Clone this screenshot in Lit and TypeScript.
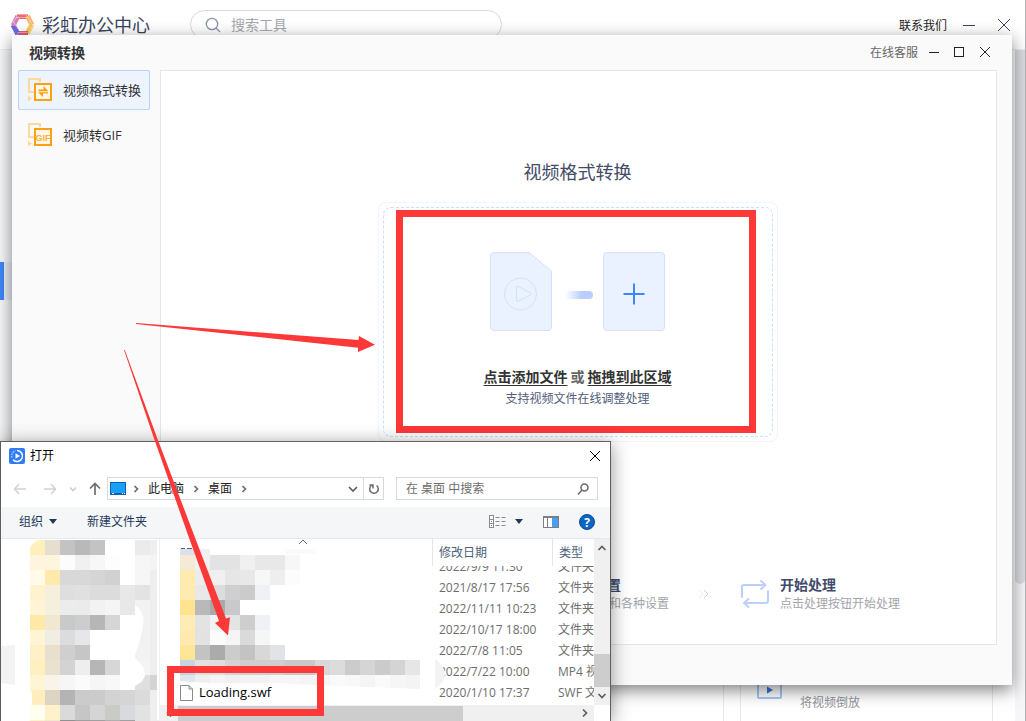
import { LitElement, html, css, svg } from "lit";
import { customElement } from "lit/decorators.js";

const base = css`
  * { box-sizing: border-box; }
  button {
    font: inherit;
    color: inherit;
    background: none;
    border: 0;
    padding: 0;
    margin: 0;
    cursor: pointer;
    display: flex;
    align-items: center;
  }
  input { font: inherit; border: 0; outline: 0; background: none; padding: 0; min-width: 0; }
  svg { display: block; flex: none; }
  a { color: inherit; text-decoration: none; }
`;

@customElement("tool-center")
class ToolCenter extends LitElement {
  static styles = [base, css`
    :host { display: flex; flex-direction: column; height: 100%; background: #fff; border-right: 1px solid #b4b4b6; border-bottom: 1px solid #999; }
    .header { display: flex; align-items: center; height: 50px; padding: 0 10px 0 11px; border-bottom: 1px solid #ececec; flex: none; }
    .brand { margin-left: 8px; font-size: 18px; line-height: 24px; color: #3a4560; }
    .search { display: flex; align-items: center; gap: 10px; width: 312px; height: 29px; margin-left: 40px; padding: 0 14px; border: 1px solid #d9d9dc; border-radius: 15px; }
    .search input { flex: 1; font-size: 14px; line-height: 20px; }
    .search input::placeholder { color: #a6a8ae; opacity: 1; }
    .actions { display: flex; align-items: center; gap: 16px; margin-left: auto; font-size: 12px; color: #222; }
    .body { display: flex; flex: 1; min-height: 0; }
    .nav { width: 16px; padding-top: 212px; background: #f7f8fa; }
    .current { display: block; width: 100%; height: 38px; border-left: 4px solid #3f86f8; background: #e9eef5; }
    .cards { flex: 1; display: grid; grid-auto-flow: column; grid-auto-columns: 253px; gap: 16px; justify-content: end; align-content: end; padding-right: 22px; min-width: 0; overflow: hidden; }
    .card { display: flex; gap: 18px; height: 70px; padding: 14px 16px; border: 1px solid #e8e8ea; border-bottom: 0; }
    .card svg { margin-top: 8px; }
    .card h3 { margin: 0 0 8px; font-size: 14px; line-height: 18px; color: #3a4560; }
    .card p { margin: 0; font-size: 12px; line-height: 22px; color: #909299; }
    .track { width: 10px; background: #f6f6f8; }
    .thumb { height: 534px; border-radius: 0 0 5px 5px; background: #d9dbe0; }
  `];

  render() {
    const cards = [["视频截取", "截取视频片段"], ["视频变速", "调整视频速度"], ["视频倒放", "将视频倒放"]];
    return html`
      <header class="header">
        <svg width="23" height="24" viewBox="0 0 23 24" fill="none" stroke-width="5">
          <path d="M6 3.500h11" stroke="#f0696f"/><path d="M16.500 3l4.300 9" stroke="#f9b268"/>
          <path d="M20.800 11.500l-4.500 9" stroke="#f7ca58"/><path d="M17 20.500H6.500" stroke="#e85c74"/>
          <path d="M6.800 21L2.200 12" stroke="#6e68dc"/><path d="M2.200 12.500l4.600-9.500" stroke="#d880b4"/>
          <path d="M2 8l5 8M6 3l-4 7M15 2l7 10M20 7l-5 9M22 12l-4 9M5 1.500h13M5 4.500h12M6 19.500h11M6 22.500h11" stroke="#fff" stroke-width=".7" opacity=".55"/>
        </svg>
        <span class="brand">彩虹办公中心</span>
        <label class="search">
          <svg width="16" height="16" fill="none" stroke="#8a94ad" stroke-width="1.300"><circle cx="7" cy="7" r="5.700"/><path d="M11 11l4 4"/></svg>
          <input type="search" placeholder="搜索工具" aria-label="搜索工具">
        </label>
        <div class="actions">
          <a href="#contact">联系我们</a>
          <button aria-label="最小化"><svg width="12" height="12" stroke="#3a4560"><path d="M0 6.500h12"/></svg></button>
          <button aria-label="关闭"><svg width="24" height="14" stroke="#3a4560" fill="none"><path d="M7 1l12 12M19 1L7 13"/></svg></button>
        </div>
      </header>
      <div class="body">
        <nav class="nav"><a class="current" href="#video" aria-label="视频工具"></a></nav>
        <main class="cards">
          ${cards.map(([title, text]) => html`
            <article class="card">
              <svg width="25" height="25" fill="none" stroke="#a5c9f8" stroke-width="2"><rect x="1" y="1" width="23" height="23" rx="1"/><path d="M10 12.500v7l6-3.500z" fill="#3577dd" stroke="none"/></svg>
              <div><h3>${title}</h3><p>${text}</p></div>
            </article>`)}
        </main>
        <div class="track"><div class="thumb"></div></div>
      </div>`;
  }
}

@customElement("video-convert")
class VideoConvert extends LitElement {
  static styles = [base, css`
    :host { display: flex; flex-direction: column; background: #fafafa; box-shadow: 0 5px 16px rgba(0, 0, 0, .5); }
    .titlebar { display: flex; align-items: center; justify-content: space-between; height: 35px; padding: 0 21px 0 17px; flex: none; }
    h1 { margin: 0; font-size: 14px; line-height: 20px; color: #333; }
    .controls { display: flex; align-items: center; gap: 11px; padding-bottom: 2px; font-size: 12px; color: #666; }
    .controls svg { stroke: #222; fill: none; }
    .controls button + button { margin-left: 3px; }
    .body { display: flex; flex: 1; min-height: 0; padding: 0 15px 40px 6px; gap: 10px; }
    .side { display: flex; flex-direction: column; gap: 5px; width: 132px; flex: none; }
    .side button { height: 40px; padding: 0 7px 2px 9px; gap: 11px; border: 1px solid transparent; border-radius: 2px; font-size: 13px; color: #333; white-space: nowrap; }
    .side button.on { background: #edf4fe; border-color: #b8d4fc; }
    .side svg { margin-top: 2px; }
    .panel { flex: 1; display: flex; flex-direction: column; align-items: center; min-width: 0; padding: 89px 2px 31px 0; background: #fff; border: 1px solid #e6e6e6; }
    h2 { margin: 0 0 18px; font-size: 18px; line-height: 24px; font-weight: 400; color: #424b66; }
    .zone { position: relative; width: 400px; padding: 4px; border: 1px solid #eff4ff; border-radius: 8px; }
    .drop { display: flex; flex-direction: column; align-items: center; height: 230px; padding-top: 44px; border: 1px dashed #cddcfb; border-radius: 8px; }
    .pick { margin: 36px 0 0; display: flex; gap: 3px; font-size: 14px; line-height: 20px; font-weight: 700; color: #666; }
    .pick a { color: #333; text-decoration: underline; text-underline-offset: 3px; }
    .hint { margin: 2px 0 0; font-size: 12px; line-height: 20px; color: #525b7a; }
    .mark { position: absolute; inset: 7px 21px 8px 17px; border: 7px solid #fc3838; pointer-events: none; }
    .steps { display: flex; align-items: center; margin: auto 0 0; padding: 0; list-style: none; white-space: nowrap; }
    .steps li { display: flex; align-items: center; gap: 11px; }
    .steps h3 { margin: 0; font-size: 14px; line-height: 20px; color: #424a6b; }
    .steps p { margin: 0; font-size: 12px; line-height: 18px; color: #a2a4aa; }
  `];

  render() {
    const next = html`<svg width="72" height="10" fill="none"><path d="M30 1l4 4-4 4" stroke="#e6eeff"/><path d="M35 1l4 4-4 4" stroke="#bfd2ff"/></svg>`;
    const glyph = html`<svg width="28" height="28" fill="none" stroke="#bdd0fd" stroke-width="2" stroke-linecap="round" stroke-linejoin="round"><path d="M1 17V7q0-2 2-2h21M20 1l4.500 4-4.500 4M27 11v10q0 2-2 2H3M7.500 19L3 23l4.500 4"/></svg>`;
    const corner = svg`<path d="M12 4V1H1v13h5" stroke="#ffd99a" stroke-width="2"/><path d="M0 17.500v6l4-3z" fill="#ffd99a"/><rect x="7" y="6" width="16" height="16" stroke="#fea011" stroke-width="2" fill="#fff8ea"/>`;
    return html`
      <header class="titlebar">
        <h1>视频转换</h1>
        <div class="controls">
          <a href="#service">在线客服</a>
          <button aria-label="最小化"><svg width="10" height="12"><path d="M0 6.500h10"/></svg></button>
          <button aria-label="最大化"><svg width="12" height="12"><rect x="1.500" y="1.500" width="9" height="9"/></svg></button>
          <button aria-label="关闭"><svg width="12" height="12"><path d="M1 1l10 10M11 1L1 11"/></svg></button>
        </div>
      </header>
      <div class="body">
        <nav class="side">
          <button class="on">
            <svg width="24" height="24" fill="none">${corner}<g fill="#fea011"><path d="M10.500 11.500h5V8l5 5.300h-10zM20 15.500h-5V19l-5-4.700h10z"/></g></svg>
            视频格式转换
          </button>
          <button>
            <svg width="24" height="24" fill="none">${corner}<text x="15" y="18" text-anchor="middle" font-family="Liberation Sans" font-size="9" font-weight="700" fill="#feb03c">GIF</text></svg>
            视频转GIF
          </button>
        </nav>
        <main class="panel">
          <h2>视频格式转换</h2>
          <section class="zone">
            <div class="drop">
              <svg width="175" height="79" fill="none">
                <defs><linearGradient id="fade"><stop stop-color="#b9ceff" stop-opacity="0"/><stop offset=".6" stop-color="#b9ceff"/></linearGradient></defs>
                <g fill="#ebf2ff" stroke="#d2e0fd">
                  <path d="M3.500.5H39L61.500 19v56q0 3.500-3.500 3.500H4Q.5 78.500.5 75V4Q.5.500 3.500.500z"/>
                  <circle cx="30.500" cy="42" r="16"/><path d="M26.500 35v13q0 2 2 1l12-6q1-1 0-2l-12-6.500q-2-1-2 .5z"/>
                  <rect x="113.500" y=".5" width="61" height="78" rx="3.500"/>
                </g>
                <path d="M75 39h24q4 0 4 4t-4 4H75z" fill="url(#fade)"/>
                <path d="M144 31.500v21M133.500 42h21" stroke="#3f86fa" stroke-width="2"/>
              </svg>
              <p class="pick"><a href="#add">点击添加文件</a>或<a href="#drag">拖拽到此区域</a></p>
              <p class="hint">支持视频文件在线调整处理</p>
            </div>
            <div class="mark"></div>
          </section>
          <ol class="steps">
            <li>${glyph}<div><h3>添加文件</h3><p>点击或拖拽添加视频文件</p></div></li>
            ${next}
            <li>${glyph}<div><h3>输出格式设置</h3><p>选择输出格式和各种设置</p></div></li>
            ${next}
            <li>${glyph}<div><h3>开始处理</h3><p>点击处理按钮开始处理</p></div></li>
          </ol>
        </main>
      </div>`;
  }
}

const CELL = 15;
const TREE_TILES = [
  "ffefbc e6dfcf c3c3c3 b9b9b9 c3c3c3 - - ebebeb efefef",
  "fff5de fdf5de fcfcfc f0f0f0 f7f7f7 fdfdfd - f6f6f6 f4f4f4",
  "fffbe8 ffe9ab d8d8d8 d8d8d8 d5d5d5 d0d1d1 - f6f6f6 efefef",
  "fff2ce f5f0dd dedede e0e0e0 dcdcdc dcdcdc e8e8e8 e3e3e3 eeeeee",
  "fff4d3 f5f0dd ebecec ebebec f2f2f2 f5f5f5 e8e8e8 f2f2f2 eeeeee",
  "ffe9a8 f0e8d0 c8c9cb cdcdce b8b6b5 d6d6d8 - f2f2f2 eeeeee",
  "fff4d3 f0ede2 dcdcdc e6e7ea - - - f2f2f2 eeeeee",
  "fff0c8 e8e0cc cfcfcf c6c6c6 - - - f2f2f2 eeeeee",
  "fff0c0 eae2d0 d3d3d3 eeeeee b6b6b6 d7d7d7 - f4f4f4 eeeeee",
  "fff4d3 f8f4ea f6f6f6 fbfbfb f6f6f6 f8f8f8 - dfdfdf d4d4d4",
  "ffeebb ddd5c3 b4b4b4 cbcbcb cbcbcb d3d3d3 d5d5d5 dbdbdb eeeeee",
  "fffff0 fff2ca dadada c6c6c6 d5d5d5 cacac6 d8dadd e2e2e2 eeeeee",
  "fff2ca f0e8d0 909090 a0a0a0 a0a0a0 b0b0b0 a0a0a0 e2e2e2 eeeeee",
];
const NAME_TILES = [
  "f5ead6 f1f1f1 e3e3e3 e3e3e3 f0f0f0 e8e8e8 e8e8e8 f7f7f7",
  "ffeab0 ececec f0f0f0 e6e6e6 e8e8e8 f7f7f7 eeeeee fcfcfc",
  "ffeab0 e8e8e8 dddddd cfcfcf cbcbcb f0f1f5",
  "ffe38e b9b9b9 a9a9a9 c9c9cc",
  "ffebb5 e3e3e3 f3f3f3 e4e4e4 cecece f0f1f5",
  "ffe9b0 e2e2e2 fbfbfb f5f5f5 dadada f6f6f6",
  "ffe596 c3c3c3 ababab cccccc c3c3c3 d8d8d8 e2e3e6",
  "c4d4e3 e0e0e0 dedede d3d3d3 cfcfcf cfcfcf cfcfcf c9c9c9 c9c9c9 d8d8d8 dcdcdc cccccc d5d5d5 cbcbcb d4d4d4 e6e6e6",
  "dfe6ec efefef f4f4f4 f0f0f0 f2f2f2 f3f3f3 f6f6f6 f6f6f6 f4f4f4 f6f6f6 fafafa f8f8f8 f5f5f5 fafafa f6f6f6 f4f4f4",
];
const tiles = (rows: string[]) => rows.map((row, y) => row.split(" ").map((c, x) =>
  c === "-" ? null : svg`<rect x=${x * CELL} y=${y * CELL} width=${CELL} height=${CELL} fill=${"#" + c} shape-rendering="crispEdges"/>`));

@customElement("open-dialog")
class OpenDialog extends LitElement {
  static styles = [base, css`
    :host { display: flex; flex-direction: column; overflow: hidden; background: #fff; border: 1px solid #5f5f5f; border-bottom: 0; font-size: 12px; line-height: 20px; color: #222; box-shadow: 0 3px 18px rgba(0, 0, 0, .42); }
    .titlebar { display: flex; align-items: center; gap: 5px; height: 28px; padding: 0 8px; flex: none; color: #000; }
    .close { margin-left: auto; }
    .path { display: flex; align-items: center; height: 37px; padding: 0 12px; flex: none; }
    .arrows { display: flex; align-items: center; gap: 16px; padding-right: 6px; }
    .arrows .tight { margin: 0 -5px; }
    .address { flex: 1; display: flex; align-items: center; height: 23px; border: 1px solid #d9d9d9; padding-left: 2px; }
    .crumbs { display: flex; align-items: center; gap: 7px; padding-left: 5px; }
    .address .drop { margin-left: auto; padding: 0 5px; }
    .refresh { width: 20px; height: 21px; justify-content: center; border-left: 1px solid #d9d9d9; }
    .find { display: flex; align-items: center; width: 202px; height: 23px; margin-left: 12px; padding: 0 8px 0 9px; border: 1px solid #d9d9d9; }
    .find input { flex: 1; }
    .find input::placeholder { color: #6d6d6d; opacity: 1; }
    .tools { display: flex; align-items: center; height: 32px; padding: 0 15px 2px 18px; gap: 30px; background: #f5f6f7; border-bottom: 1px solid #e5e8ec; flex: none; color: #1e395b; }
    .tools button { gap: 6px; }
    .views { display: flex; align-items: center; gap: 20px; margin-left: auto; }
    .views .list { gap: 9px; }
    .content { flex: 1; display: flex; min-height: 0; }
    .tree { position: relative; width: 159px; border-right: 1px solid #f0f0f0; flex: none; }
    .tiles { position: absolute; left: 0; top: 0; width: 100%; height: 100%; }
    .files { flex: 1; display: grid; grid-template-columns: 1fr 16px; grid-template-rows: 1fr 16px; min-width: 0; }
    .list { position: relative; min-height: 0; min-width: 0; }
    table { position: relative; display: flex; flex-direction: column; height: 100%; color: #6d6d6d; overflow: hidden; }
    thead { display: block; flex: none; }
    tbody { flex: 1; min-height: 0; display: flex; flex-direction: column; justify-content: flex-end; padding-bottom: 2px; overflow: hidden; }
    tr { display: grid; grid-template-columns: 1fr 120px 42px; flex: none; }
    th, td { display: flex; align-items: center; padding: 0 0 0 6px; font-weight: 400; text-align: left; white-space: nowrap; overflow: hidden; }
    th { height: 27px; border-left: 1px solid #e5e5e5; color: #4c607a; }
    th:first-child { border: 0; align-items: flex-start; justify-content: center; padding-left: 14px; }
    td { height: 21px; line-height: 21px; }
    td:nth-child(2) { padding-left: 7px; }
    td:first-child { gap: 6px; padding-left: 20px; font-size: 13px; color: #000; }
    .vbar { display: flex; flex-direction: column; align-items: center; background: #f0f0f0; padding: 4px 0; }
    .vthumb { width: 100%; height: 33px; margin: auto 0 4px; background: #cdcdcd; }
    .hbar { display: flex; align-items: center; gap: 4px; background: #f0f0f0; padding: 0 4px; }
    .hthumb { width: 67%; height: 15px; margin-right: auto; background: #cdcdcd; }
  `];

  render() {
    const chevron = (d: string, color = "#5e5e5e") => html`<svg width="10" height="10" fill="none" stroke=${color} stroke-width="1.700"><path d=${d}/></svg>`;
    const right = chevron("M3.500 2l3 3-3 3", "#6d6d6d");
    const caret = html`<svg width="8" height="5" fill="#1e395b"><path d="M0 0h8L4 5z"/></svg>`;
    const rows = [
      ["2022/9/9 11:30", "文件夹"], ["2021/8/17 17:56", "文件夹"], ["2022/11/11 10:23", "文件夹"],
      ["2022/10/17 18:00", "文件夹"], ["2022/7/8 11:05", "文件夹"], ["2022/7/22 10:00", "MP4 视频"],
      ["2020/1/10 17:37", "SWF 文件", "Loading.swf"],
    ];
    return html`
      <header class="titlebar">
        <svg width="16" height="16" fill="none"><rect width="16" height="16" rx="2" fill="#2f7cf6"/><path d="M8 2.500a5.500 5.500 0 1 1-4 9.300" stroke="#fff" stroke-width="1.500"/><path d="M3 9.500a5.500 5.500 0 0 1 3.500-6.800" stroke="#bcd8ff" stroke-width="1.200" stroke-dasharray="1.500 1"/><path d="M6.500 5.300v5.400L11 8z" fill="#fff"/></svg>
        打开
        <button class="close" aria-label="关闭"><svg width="14" height="14" stroke="#000" fill="none"><path d="M2 2l10 10M12 2L2 12"/></svg></button>
      </header>
      <div class="path">
        <div class="arrows">
          <button aria-label="后退"><svg width="14" height="12" fill="none" stroke="#d2d2d2" stroke-width="1.500"><path d="M6 1L1.500 6 6 11M1.500 6H13"/></svg></button>
          <button aria-label="前进"><svg width="14" height="12" fill="none" stroke="#d2d2d2" stroke-width="1.500"><path d="M8 1l4.500 5L8 11M12.500 6H1"/></svg></button>
          <button class="tight" aria-label="最近位置">${chevron("M2 3.500l3 3 3-3", "#d0d0d0")}</button>
          <button aria-label="上移"><svg width="12" height="14" fill="none" stroke="#6e6e6e" stroke-width="1.700"><path d="M1 6.500l5-5 5 5M6 1.500V13"/></svg></button>
        </div>
        <div class="address">
          <svg width="16" height="13"><rect width="16" height="13" fill="#0a64ad"/><rect x="1" y="1" width="14" height="10" fill="#18a0fb"/><path d="M2 11.500h2M12 11.500h1M14 11.500h1" stroke="#fff"/></svg>
          <nav class="crumbs">${right}<a href="#pc">此电脑</a>${right}<a href="#desktop">桌面</a>${right}</nav>
          <button class="drop" aria-label="历史记录">${chevron("M1 3l4 4 4-4")}</button>
          <button class="refresh" aria-label="刷新"><svg width="12" height="12" fill="none" stroke="#6a6a6a" stroke-width="1.500"><path d="M8.500 2.500a4.300 4.300 0 1 1-5 0M1.500 2h3.500v3.500"/></svg></button>
        </div>
        <label class="find">
          <input type="search" placeholder="在 桌面 中搜索" aria-label="在 桌面 中搜索">
          <svg width="12" height="12" fill="none" stroke="#6d6d6d" stroke-width="1.600"><circle cx="7.500" cy="4.500" r="3.500"/><path d="M5 7l-4 4.500"/></svg>
        </label>
      </div>
      <div class="tools">
        <button>组织 ${caret}</button>
        <button>新建文件夹</button>
        <div class="views">
          <button class="list" aria-label="更改视图">
            <svg width="17" height="13" fill="none" stroke="#8b8b8b"><rect x=".5" y=".5" width="4" height="12" fill="#fff"/><path d="M1 4.500h3M1 8.500h3M6.500 2.500h4m2 0h4M6.500 6.500h4m2 0h4M6.500 10.500h4m2 0h4"/><path d="M2 6.500h1" stroke="#2a8ae8"/><path d="M2 10.500h1" stroke="#e33"/></svg>
            ${caret}
          </button>
          <button aria-label="预览窗格"><svg width="16" height="12" fill="none" stroke="#7a7f86"><rect x=".5" y=".5" width="15" height="11" fill="#fff"/><path d="M1 1.500h14M4.500 2v9"/><rect x="9" y="2" width="6" height="9" fill="#4a9df0" stroke="none"/></svg></button>
          <button aria-label="帮助"><svg width="16" height="16"><circle cx="8" cy="8" r="7.500" fill="#0b66c3" stroke="#0a4a92"/><text x="8" y="12.500" text-anchor="middle" font-family="Open Sans" font-size="12" font-weight="700" fill="#fff">?</text></svg></button>
        </div>
      </div>
      <div class="content">
        <aside class="tree">
          <svg class="tiles" fill="none">
            <path d="M0 107l14-1v40l-14-2z" fill="#f3f3f3"/>
            <g transform="translate(29 1)">${tiles(TREE_TILES)}</g>
            <path d="M29 0h12q-11 3-12 10zM29 151q2 0 2 6v10l-2-2zM134 66q10 6 8 20t-8 30zM134 119q20 18 0 28zM156 0h3v181h-3z" fill="#fff"/>
          </svg>
        </aside>
        <section class="files">
          <div class="list">
            <svg class="tiles">
              <path d="M20 10h15v6H20z" fill="#dde0e8"/><path d="M35 10h15v6H35z" fill="#f0f0f0"/><path d="M125 10h30v5h-30z" fill="#fafafa"/>
              <path d="M21 9.500h4M27 9.500h5" stroke="#4c607a"/>
              <g transform="translate(20 16)">${tiles(NAME_TILES)}</g>
              <path d="M20 142q8 1 34 2h60q40 2 146 6v2H20z" fill="#fff"/>
            </svg>
            <table>
              <thead><tr><th aria-label="名称"><svg width="10" height="6" fill="none" stroke="#6d6d6d"><path d="M1 5l4-4 4 4"/></svg></th><th>修改日期</th><th>类型</th></tr></thead>
              <tbody>
                ${rows.map(([date, type, name]) => html`<tr>
                  <td>${name ? html`<svg width="13" height="16" fill="#fff" stroke="#8a8a8a"><path d="M.5.500h8.500l3.500 3.500v11.500H.5zM9 .5V4h3.500"/></svg>${name}` : ""}</td>
                  <td>${date}</td><td>${type}</td></tr>`)}
              </tbody>
            </table>
            <svg class="tiles"><path d="M275 120q20 15 0 30z" fill="#f3f3f3"/></svg>
          </div>
          <div class="vbar">${chevron("M1.500 7L5 3.500 8.500 7")}<div class="vthumb"></div>${chevron("M1.500 3L5 6.500 8.500 3")}</div>
          <div class="hbar">${chevron("M7 1.500L3.500 5 7 8.500")}<div class="hthumb"></div>${chevron("M3 1.500L6.500 5 3 8.500")}</div>
        </section>
      </div>`;
  }
}

@customElement("app-root")
class AppRoot extends LitElement {
  static styles = css`
    :host { display: block; position: relative; height: 100vh; overflow: hidden; font-family: "Open Sans", "Noto Sans CJK SC", sans-serif; background: #fff; }
    .convert { position: absolute; inset: 35px 14px 36px 12px; }
    .open { position: absolute; left: 0; top: 441px; bottom: 0; width: 611px; box-sizing: border-box; }
    .notes { position: absolute; left: 0; top: 0; width: 100%; height: 100%; pointer-events: none; }
  `;

  render() {
    return html`
      <tool-center></tool-center>
      <video-convert class="convert"></video-convert>
      <open-dialog class="open"></open-dialog>
      <svg class="notes" fill="#fc3838">
        <path d="M136 323L358.500 340l.5-4L375 344.700 358 352v-4.300L136 324z"/>
        <path d="M124 350h.8l32 87 37.200 98 32 83.500 4-1.200-2 18.300-13-12.600 4-2L188 535l-34.500-98z"/>
        <rect x="170.500" y="669.500" width="150" height="43" fill="none" stroke="#fc3838" stroke-width="7"/>
      </svg>`;
  }
}
